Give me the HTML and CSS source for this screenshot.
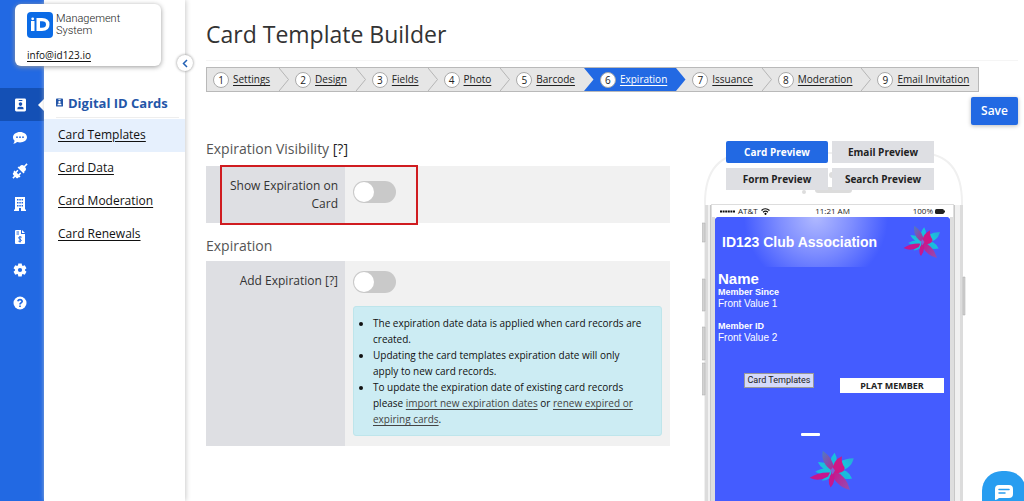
FILE: index.html
```html
<!DOCTYPE html>
<html lang="en">
<head>
<meta charset="utf-8">
<title>Card Template Builder</title>
<link rel="stylesheet" href="styles.css">
</head>
<body>
<svg class="defs" aria-hidden="true">
  <defs>
    <linearGradient id="petal" x1="0" y1="0" x2="1" y2="1">
      <stop offset="0" stop-color="#4a7fc4"/><stop offset=".5" stop-color="#c41b8f"/><stop offset="1" stop-color="#8f50b5"/>
    </linearGradient>
    <linearGradient id="teal" x1="0" y1="1" x2="1" y2="0">
      <stop offset="0" stop-color="#18a9e0"/><stop offset=".6" stop-color="#19c3dc"/><stop offset="1" stop-color="#2f9bd8"/>
    </linearGradient>
    <symbol id="flower" viewBox="56 28 140 124">
      <path fill="url(#teal)" d="M134 90Q118 62 83 65Q96 92 130 94ZM130 86Q98 78 75 94Q104 112 130 98ZM134 92Q100 92 96 121Q124 120 134 92Z"/>
      <path fill="url(#teal)" d="M122 88Q114 58 134 36Q148 60 132 88ZM130 92Q142 54 192 53Q184 92 130 94ZM126 92Q148 122 187 114Q174 82 130 86Z"/>
      <path fill="url(#petal)" d="M128 92Q90 68 98 30Q132 54 132 88ZM122 92Q136 138 181 149Q170 106 132 90Z"/>
      <path fill="#c7168d" d="M128 92Q108 120 122 142Q140 120 130 92ZM120 96Q86 94 58 112Q86 126 114 108Z"/>
      <path fill="#cf1785" d="M126 92Q130 58 156 47Q153 66 164 80Q168 94 144 98Z"/>
      <path fill="#7766d6" d="M128 80L135 90L128 102L121 90Z"/>
    </symbol>
    <symbol id="badge" viewBox="0 0 12 14">
      <path fill="currentColor" fill-rule="evenodd" d="M1.500 0h9Q12 0 12 1.500v11Q12 14 10.500 14h-9Q0 14 0 12.500v-11Q0 0 1.500 0ZM4 1.500v1h4v-1ZM6 4a2 2 0 1 0 0 4a2 2 0 0 0 0-4ZM2.500 11.500h7Q9.500 8.800 7.500 8.800h-3Q2.500 8.800 2.500 11.500Z"/>
    </symbol>
  </defs>
</svg>

<div class="app">
  <nav class="rail" aria-label="Sections">
    <a class="rail-item active" href="#" aria-label="Digital ID cards"><svg width="11" height="14"><use href="#badge"/></svg></a>
    <a class="rail-item" href="#" aria-label="Messages"><svg width="14" height="12" viewBox="0 0 14 12"><path fill="#fff" d="M7 0c3.900 0 7 2.300 7 5.200s-3.100 5.200-7 5.200c-1 0-2-.2-2.800-.5C3.200 10.700 1.800 11.600.3 11.700c.7-.8 1.200-1.900 1.300-2.900C.6 7.900 0 6.600 0 5.200 0 2.300 3.100 0 7 0Z"/><g fill="#2269e3"><circle cx="4" cy="5.200" r=".9"/><circle cx="7" cy="5.200" r=".9"/><circle cx="10" cy="5.200" r=".9"/></g></svg></a>
    <a class="rail-item" href="#" aria-label="Integrations"><svg width="16" height="16" viewBox="0 0 16 16"><g transform="rotate(-45 8 8)" fill="#fff"><path d="M-2 7.200h3V8.800h-3ZM.5 6q0-1.500 1.500-1.500h1V3.800h1.500v8.400H3v-.7H2Q.5 11.500.5 10ZM4.500 5.300H7v1.500H4.500ZM4.500 9.200H7v1.500H4.500ZM8.800 3.800h1.500v.7h1.700q2.500 0 2.500 3.500t-2.500 3.500h-1.700v.7H8.800ZM14 7.200h4v1.600h-4Z"/></g></svg></a>
    <a class="rail-item" href="#" aria-label="Organization"><svg width="12" height="14" viewBox="0 0 12 14"><path fill="#fff" fill-rule="evenodd" d="M1 0h10v12.500h1V14H7v-3H5v3H0v-1.500h1ZM3 2v1.500h1.500V2ZM5.300 2v1.500h1.500V2ZM7.600 2v1.500H9V2ZM3 5v1.500h1.500V5ZM5.300 5v1.500h1.500V5ZM7.600 5v1.500H9V5ZM3 8v1.500h1.500V8ZM5.300 8v1.500h1.500V8ZM7.600 8v1.500H9V8Z"/></svg></a>
    <a class="rail-item" href="#" aria-label="Billing"><svg width="10" height="14" viewBox="0 0 10 14"><path fill="#fff" d="M1 0h5v4h4v9q0 1-1 1H1q-1 0-1-1V1q0-1 1-1ZM7 0l3 3H7Z"/><path fill="none" stroke="#2269e3" d="M1.500 2h2.500M1.500 4h2.500M6.700 7.200Q5 6.500 3.900 7.300T5 9.200T6 11T3.400 11.200M5 6v6.500"/></svg></a>
    <a class="rail-item" href="#" aria-label="Settings"><svg width="14" height="14" viewBox="0 0 14 14"><g fill="#fff"><circle cx="7" cy="7" r="5"/><path id="tooth" d="M5.300.5h3.400l.5 3H4.800Zm0 13h3.400l.5-3H4.800Z"/><use href="#tooth" transform="rotate(60 7 7)"/><use href="#tooth" transform="rotate(120 7 7)"/></g><circle cx="7" cy="7" r="2.100" fill="#2269e3"/></svg></a>
    <a class="rail-item" href="#" aria-label="Help"><svg width="14" height="14" viewBox="0 0 14 14"><circle cx="7" cy="7" r="6.500" fill="#fff"/><path fill="none" stroke="#2269e3" stroke-width="1.700" d="M4.800 5.300Q5.200 3.600 7 3.600T9.200 5.300Q9.200 6.300 7.900 6.900Q7 7.400 7 8.400M7 9.400v1.700"/></svg></a>
  </nav>

  <aside class="sidebar">
    <h2 class="side-title"><svg width="7" height="9"><use href="#badge"/></svg>Digital ID Cards</h2>
    <ul class="side-links">
      <li class="current"><a href="#">Card Templates</a></li>
      <li><a href="#">Card Data</a></li>
      <li><a href="#">Card Moderation</a></li>
      <li><a href="#">Card Renewals</a></li>
    </ul>
    <button class="collapse" aria-label="Collapse menu"><svg width="6" height="9" viewBox="0 0 6 9"><path fill="none" stroke="#2461b5" stroke-width="1.500" d="M5 1L1.500 4.500L5 8"/></svg></button>
  </aside>

  <div class="account">
    <div class="brand">
      <svg width="26" height="26" viewBox="0 0 26 26"><rect width="26" height="26" rx="4" fill="#0b6be6"/><path fill="#fff" fill-rule="evenodd" d="M4 9h3.500v10H4ZM9.500 6H15Q22.500 6 22.500 12.500T15 19H9.500ZM13 9.300v6.500h2Q19 15.800 19 12.500T15 9.300Z"/><circle cx="5.700" cy="6.800" r="1.400" fill="#fff"/></svg>
      <span>Management<br>System</span>
    </div>
    <a href="#">info@id123.io</a>
  </div>

  <main class="main">
    <h1>Card Template Builder</h1>
    <ol class="steps">
      <li><a href="#"><b>1</b><span>Settings</span></a><svg class="chev" viewBox="0 0 10 23"><path d="M0 0L9.500 11.500L0 23"/></svg></li>
      <li><a href="#"><b>2</b><span>Design</span></a><svg class="chev" viewBox="0 0 10 23"><path d="M0 0L9.500 11.500L0 23"/></svg></li>
      <li><a href="#"><b>3</b><span>Fields</span></a><svg class="chev" viewBox="0 0 10 23"><path d="M0 0L9.500 11.500L0 23"/></svg></li>
      <li><a href="#"><b>4</b><span>Photo</span></a><svg class="chev" viewBox="0 0 10 23"><path d="M0 0L9.500 11.500L0 23"/></svg></li>
      <li><a href="#"><b>5</b><span>Barcode</span></a><svg class="chev into" viewBox="0 0 10 23"><path d="M0 0H10V23H0L9.500 11.500Z"/></svg></li>
      <li class="on"><a href="#" aria-current="step"><b>6</b><span>Expiration</span></a><svg class="chev out" viewBox="0 0 10 23"><path d="M0 0L9.500 11.500L0 23Z"/></svg></li>
      <li><a href="#"><b>7</b><span>Issuance</span></a><svg class="chev" viewBox="0 0 10 23"><path d="M0 0L9.500 11.500L0 23"/></svg></li>
      <li><a href="#"><b>8</b><span>Moderation</span></a><svg class="chev" viewBox="0 0 10 23"><path d="M0 0L9.500 11.500L0 23"/></svg></li>
      <li><a href="#"><b>9</b><span>Email Invitation</span></a></li>
    </ol>
    <div class="actions"><button class="save">Save</button></div>

    <div class="columns">
      <form class="form">
        <h3>Expiration Visibility <strong>[?]</strong></h3>
        <div class="row marked">
          <label for="show">Show Expiration on Card</label>
          <div class="field"><input class="toggle" type="checkbox" id="show"></div>
        </div>
        <h3>Expiration</h3>
        <div class="row">
          <label for="add">Add Expiration [?]</label>
          <div class="field">
            <input class="toggle" type="checkbox" id="add">
            <ul class="notice">
              <li>The expiration date data is applied when card records are created.</li>
              <li>Updating the card templates expiration date will only apply to new card records.</li>
              <li>To update the expiration date of existing card records please <a href="#">import new expiration dates</a> or <a href="#">renew expired or expiring cards</a>.</li>
            </ul>
          </div>
        </div>
      </form>

      <section class="preview" aria-label="Preview">
        <svg class="phone" width="265" height="370" viewBox="0 0 265 370" aria-hidden="true">
          <path fill="#fff" stroke="#f0f0f0" stroke-width="2" d="M3 370V62Q3 12 48 12H217Q260 12 260 62V370"/>
          <path fill="#f1f1f1" d="M3 64h10v306H3ZM248 64h13v306h-13Z"/>
          <path fill="#dcdcdc" d="M3 64h3v306H3ZM258 64h3v306h-3Z"/>
          <path fill="#dedede" d="M9 64h4v306H9ZM248 64h4v306h-4Z"/>
          <path fill="#c8c8c8" d="M8 64h1v306H8ZM252 64h1v306h-1Z"/>
          <path fill="#ddd" d="M9 63h243v1H9Z"/>
          <g fill="#d2d2d2" stroke="#ababab" stroke-width=".5"><path d="M0 82h3v19H0ZM0 138h3v32H0ZM0 186h3v33H0ZM0 222h3v32H0ZM261 136h2v38h-2Z"/></g>
          <circle cx="130" cy="34" r="3" fill="#ddd"/><circle cx="102" cy="51" r="2" fill="#ddd"/>
          <rect x="113" y="46" width="37" height="6" rx="3" fill="#dcdcdc"/>
        </svg>
        <div class="tabs">
          <button class="chosen">Card Preview</button><button>Email Preview</button>
          <button>Form Preview</button><button>Search Preview</button>
        </div>
        <div class="screen">
          <div class="status">
            <span><svg width="15" height="3" viewBox="0 0 15 3"><path stroke="#111" stroke-width="2" stroke-dasharray="2 .6" d="M0 1.500H15"/></svg>AT&amp;T<svg width="9" height="7" viewBox="0 0 9 7"><path fill="none" stroke="#111" stroke-width="1.200" d="M.5 2.500Q4.500-1 8.500 2.500M2 4.300Q4.500 2 7 4.300"/><circle cx="4.500" cy="5.800" r="1.100"/></svg></span>
            <span>11:21 AM</span>
            <span>100%<svg width="10" height="5" viewBox="0 0 10 5"><rect width="9" height="5" rx="1.500" fill="#222"/><path d="M9.500 1.500v2" stroke="#222"/></svg></span>
          </div>
          <div class="card">
            <header class="card-head"><h4>ID123 Club Association</h4><svg width="38" height="34"><use href="#flower"/></svg></header>
            <dl class="details">
              <dt class="name">Name</dt>
              <dt>Member Since</dt><dd>Front Value 1</dd>
              <dt>Member ID</dt><dd>Front Value 2</dd>
            </dl>
            <p class="level">PLAT MEMBER</p>
            <div class="handle"></div>
            <svg class="logo" width="46" height="41"><use href="#flower"/></svg>
            <div class="tip" role="tooltip">Card Templates</div>
          </div>
        </div>
      </section>
    </div>
  </main>
  <button class="chat" aria-label="Open chat"><svg width="18" height="15" viewBox="0 0 18 15"><path fill="#fff" d="M4 0h10q4 0 4 4v5q0 4-4 4H4q-2 2-4 2V4q0-4 4-4Z"/><path stroke="#289df0" stroke-width="1.500" stroke-linecap="round" d="M4 4.500h10M4 8h6"/></svg></button>
</div>
</body>
</html>
```

FILE: styles.css
```css
*, *::before, *::after { box-sizing: border-box; }
body { margin: 0; font: 12px/18px "Open Sans", "Noto Sans", sans-serif; color: #333; background: #fff; }
h1, h2, h3, h4, ul, ol, dl, dd, p { margin: 0; padding: 0; font-weight: 400; }
ul, ol { list-style: none; }
a { color: inherit; }
button { border: 0; padding: 0; font: inherit; cursor: pointer; }
svg { display: block; flex: none; }
.defs { position: absolute; width: 0; height: 0; }

.app { position: relative; display: flex; height: 100vh; overflow: hidden; }
.rail { flex: none; width: 44px; padding-top: 88px; background: #2269e3; }
.rail-item { display: flex; align-items: center; justify-content: center; height: 33px; padding-right: 4px; color: #fff; position: relative; }
.rail-item.active { background: #1450b5; }
.rail-item.active::after { content: ""; position: absolute; right: 0; border: 6px solid transparent; border-right-color: #fff; border-left: 0; }

.sidebar { position: relative; flex: none; width: 141px; padding-top: 88px; box-shadow: 1px 0 5px #ccc; }
.side-title { display: flex; align-items: center; gap: 5px; height: 30px; margin: 0 6px 1px 12px; border-bottom: 1px solid #eee; font-size: 13px; font-weight: 700; color: #2456a8; white-space: nowrap; }
.side-links li { height: 33px; padding: 7px 14px; color: #111; white-space: nowrap; }
.side-links .current { background: #e6f0fd; }
.side-links a { text-underline-offset: 2px; }
.collapse { position: absolute; top: 55px; right: -8px; display: grid; place-items: center; width: 16px; height: 16px; border-radius: 50%; background: #fff; box-shadow: 0 0 3px #888; }

.account { position: absolute; left: 15px; top: 4px; width: 146px; padding: 8px 12px 2px; border-radius: 6px; background: #fff; box-shadow: 0 1px 5px #999; color: #222; }
.account > a { display: inline-block; margin-top: 8px; font-size: 10px; text-underline-offset: 2px; color: #111; }
.brand { display: flex; align-items: center; gap: 3px; font: 300 11px/12px Roboto, sans-serif; }

.main { flex: 1; min-width: 0; padding: 16px 6px 0 21px; }
h1 { height: 45px; border-bottom: 1px solid #f5f5f5; font-size: 23px; line-height: 36px; color: #333; }
.steps { display: flex; width: max-content; height: 25px; margin-top: 6px; border: 1px solid #b9b9b9; background: #e6e6e6; font-size: 10px; line-height: 23px; color: #222; }
.steps li { display: flex; white-space: nowrap; }
.steps a { display: flex; align-items: center; gap: 4px; padding: 0 9px 0 6px; text-decoration: none; }
.steps a span { text-decoration: underline; text-underline-offset: 2px; }
.steps b { width: 16px; height: 16px; border: 1px solid #aaa; border-radius: 50%; background: #fff; color: #222; font-size: 10px; font-weight: 400; line-height: 14px; text-align: center; }
.steps .on a { background: #2269e3; color: #fff; }
.chev { width: 10px; height: 23px; }
.chev path { fill: none; stroke: #b5b5b5; }
.chev.into path, .chev.out path { fill: #2269e3; stroke: none; }
.actions { display: flex; justify-content: flex-end; padding-top: 5px; }
.save { width: 47px; height: 28px; border-radius: 2px; background: #2269e3; color: #fff; font-weight: 600; box-shadow: 0 1px 4px #bbb; }

.columns { display: flex; gap: 32px; padding-top: 16px; }
.form { flex: 1; min-width: 0; }
h3 { height: 25px; font-size: 14px; line-height: 16px; color: #555; }
h3 strong { font-weight: 400; color: #222; }
.row + h3 { margin-top: 15px; height: 23px; }
.row { position: relative; display: flex; background: #f1f1f1; }
.row label { flex: none; width: 139px; min-height: 57px; padding: 11px 7px 10px 20px; background: #dedfe3; text-align: right; color: #333; }
.marked::after { content: ""; position: absolute; left: 14px; top: -1px; bottom: -2px; width: 198px; border: 2px solid #d01c20; }
.field { flex: 1; min-width: 0; padding: 10px 8px; }
.marked .field { padding-top: 15px; }
.toggle { appearance: none; display: block; width: 43px; height: 22px; margin: 0; padding: 1px; border-radius: 11px; background: #c9c9c9; }
.toggle::before { content: ""; display: block; width: 20px; height: 20px; border-radius: 50%; background: #fff; }
.toggle:checked { background: #2269e3; }
.toggle:checked::before { margin-left: auto; }
.notice { margin-top: 13px; padding: 8px 16px 8px 19px; border: 1px solid #bee5eb; border-radius: 3px; background: #ccecf3; font-size: 10px; line-height: 16px; color: #111; list-style: disc; }
.notice a { color: #444; text-underline-offset: 2px; }

.preview { position: relative; flex: none; width: 316px; }
.phone { position: absolute; left: 0; top: 0; }
.tabs { position: relative; display: grid; grid-template-columns: 102px 102px; gap: 5px 4px; margin-left: 24px; }
.tabs button { height: 22px; background: #dedfe3; color: #222; font-size: 10px; font-weight: 700; }
.tabs .chosen { border-radius: 2px; background: #2269e3; color: #fff; }
.screen { position: relative; width: 243px; margin: 15px 0 0 9px; padding: 0 4px; }
.status { display: grid; grid-template-columns: 1fr auto 1fr; align-items: center; height: 12px; margin: 0 -3px; padding: 0 8px; background: #fff; font-size: 8px; line-height: 12px; color: #222; }
.status span { display: flex; align-items: center; gap: 3px; }
.status span:last-child { justify-content: flex-end; gap: 2px; }
.card { position: relative; height: 300px; border-radius: 4px 4px 0 0; background: #445cff; color: #fff; font-family: "Liberation Sans", Arial, sans-serif; }
.card-head { display: flex; align-items: center; justify-content: space-between; height: 50px; padding: 0 9px 0 7px; border-radius: 4px 4px 0 0; background: radial-gradient(circle 72px at 101px 0, #b0b9ff, #7f8eff 50%, #445cff); }
.card-head h4 { font-size: 14px; font-weight: 700; white-space: nowrap; }
.details { padding: 4px 3px 0; font-size: 10px; line-height: 12px; }
.details dt { font-size: 9px; font-weight: 700; }
.details .name { font-size: 15px; line-height: 15px; }
.details dd + dt { margin-top: 10px; }
.level { width: 104px; margin: 34px 6px 0 auto; background: #fff; color: #222; font: 700 9px/15px "Open Sans", sans-serif; text-align: center; }
.handle { width: 19px; height: 3px; margin: 40px 0 0 86px; border-radius: 1px; background: #fff; }
.logo { margin: 14px 0 0 94px; }
.tip { position: absolute; left: 29px; top: 156px; width: 70px; border: 1px solid #999; background: #d5dafa; color: #222; font: 9px/13px Roboto, sans-serif; text-align: center; }
.chat { position: absolute; left: calc(100% - 42px); bottom: -12px; display: grid; place-items: center; width: 44px; height: 42px; border-radius: 20px 20px 0 0; background: #289df0; }
```
